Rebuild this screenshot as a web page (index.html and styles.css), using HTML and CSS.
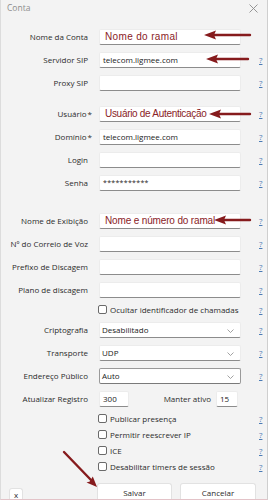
FILE: index.html
```html
<!DOCTYPE html>
<html lang="pt-BR">

<head>
    <meta charset="UTF-8">
    <meta name="viewport" content="width=device-width, initial-scale=1.0">
    <title>Conta</title>

    <link rel="stylesheet" href="styles.css">
</head>

<body>

    <!-- DIALOG -->
    <div class="dialog">
        <div class="dialog__title">
            <span class="dialog__title-text">Conta</span>
            <svg class="dialog__close" width="9" height="9" viewBox="0 0 9 9">
                <path d="M0.5 0.5 L8.5 8.5 M8.5 0.5 L0.5 8.5" stroke="#8a8a8a" stroke-width="0.9" fill="none" />
            </svg>
        </div>

        <div class="form">
            <div class="form__row">
                <label class="form__label">Nome da Conta</label>
                <div class="form__field"><span class="form__note form__note--wide">Nome do ramal</span></div>
            </div>
            <div class="form__row">
                <label class="form__label">Servidor SIP</label>
                <div class="form__field">telecom.ligmee.com</div>
                <a class="form__help" href="#">?</a>
            </div>
            <div class="form__row">
                <label class="form__label">Proxy SIP</label>
                <div class="form__field"></div>
                <a class="form__help" href="#">?</a>
            </div>

            <div class="form__row form__row--gap-s">
                <label class="form__label">Usuário<span class="form__req">*</span></label>
                <div class="form__field"><span class="form__note form__note--tight">Usuário de Autenticação</span></div>
                <a class="form__help" href="#">?</a>
            </div>
            <div class="form__row">
                <label class="form__label">Domínio<span class="form__req">*</span></label>
                <div class="form__field">telecom.ligmee.com</div>
                <a class="form__help" href="#">?</a>
            </div>
            <div class="form__row">
                <label class="form__label">Login</label>
                <div class="form__field"></div>
                <a class="form__help" href="#">?</a>
            </div>
            <div class="form__row">
                <label class="form__label">Senha</label>
                <div class="form__field form__field--pass">***********</div>
                <a class="form__help" href="#">?</a>
            </div>

            <div class="form__row form__row--gap-l">
                <label class="form__label">Nome de Exibição</label>
                <div class="form__field"><span class="form__note form__note--mid">Nome e número do ramal</span></div>
                <a class="form__help" href="#">?</a>
            </div>
            <div class="form__row">
                <label class="form__label">Nº do Correio de Voz</label>
                <div class="form__field"></div>
                <a class="form__help" href="#">?</a>
            </div>
            <div class="form__row">
                <label class="form__label">Prefixo de Discagem</label>
                <div class="form__field"></div>
                <a class="form__help" href="#">?</a>
            </div>
            <div class="form__row">
                <label class="form__label">Plano de discagem</label>
                <div class="form__field"></div>
                <a class="form__help" href="#">?</a>
            </div>
            <div class="form__row form__row--check">
                <span></span>
                <div class="check"><span class="check__box"></span>Ocultar identificador de chamadas</div>
                <a class="form__help" href="#">?</a>
            </div>

            <div class="form__row">
                <label class="form__label">Criptografia</label>
                <div class="form__field form__select">Desabilitado
                    <svg class="form__chevron" width="7" height="4" viewBox="0 0 7 4"><path d="M0.5 0.5 L3.5 3.5 L6.5 0.5" stroke="#8a8a8a" stroke-width="0.8" fill="none" /></svg>
                </div>
                <a class="form__help" href="#">?</a>
            </div>
            <div class="form__row">
                <label class="form__label">Transporte</label>
                <div class="form__field form__select">UDP
                    <svg class="form__chevron" width="7" height="4" viewBox="0 0 7 4"><path d="M0.5 0.5 L3.5 3.5 L6.5 0.5" stroke="#8a8a8a" stroke-width="0.8" fill="none" /></svg>
                </div>
                <a class="form__help" href="#">?</a>
            </div>
            <div class="form__row">
                <label class="form__label">Endereço Público</label>
                <div class="form__field form__select form__select--focus">Auto
                    <svg class="form__chevron" width="7" height="4" viewBox="0 0 7 4"><path d="M0.5 0.5 L3.5 3.5 L6.5 0.5" stroke="#8a8a8a" stroke-width="0.8" fill="none" /></svg>
                </div>
                <a class="form__help" href="#">?</a>
            </div>
            <div class="form__row">
                <label class="form__label">Atualizar Registro</label>
                <div class="form__pair">
                    <div class="form__field form__field--num">300</div>
                    <span class="form__keep">Manter ativo</span>
                    <div class="form__field form__field--short">15</div>
                </div>
            </div>

            <div class="form__row form__row--small">
                <span></span>
                <div class="check"><span class="check__box"></span>Publicar presença</div>
                <a class="form__help" href="#">?</a>
            </div>
            <div class="form__row form__row--small">
                <span></span>
                <div class="check"><span class="check__box"></span>Permitir reescrever IP</div>
                <a class="form__help" href="#">?</a>
            </div>
            <div class="form__row form__row--small">
                <span></span>
                <div class="check"><span class="check__box"></span>ICE</div>
                <a class="form__help" href="#">?</a>
            </div>
            <div class="form__row form__row--small">
                <span></span>
                <div class="check"><span class="check__box"></span>Desabilitar timers de sessão</div>
                <a class="form__help" href="#">?</a>
            </div>
        </div>

        <div class="dialog__footer">
            <button class="btn btn--x">x</button>
            <button class="btn btn--save">Salvar</button>
            <button class="btn btn--cancel">Cancelar</button>
        </div>

        <!-- setas de anotação -->
        <svg class="marks" width="268" height="500" viewBox="0 0 268 500">
            <g stroke="#861b1d" stroke-width="2.4" fill="none" stroke-linecap="round">
                <line x1="213" y1="35" x2="250" y2="35" />
                <line x1="215" y1="59" x2="248" y2="59" />
                <line x1="218" y1="114" x2="250" y2="114" />
                <line x1="223" y1="220" x2="250" y2="220" />
                <line x1="64" y1="452" x2="91" y2="480" />
            </g>
            <g fill="#861b1d">
                <polygon points="204,35 216,30.5 214,35 216,39.5" />
                <polygon points="206,59 218,54.5 216,59 218,63.5" />
                <polygon points="209,114 221,109.5 219,114 221,118.5" />
                <polygon points="214,220 226,215.5 224,220 226,224.5" />
                <polygon points="97,487 86.5,482.5 89.8,481.5 92.8,476.5" />
            </g>
        </svg>
    </div>
    <!-- END DIALOG -->

</body>
</html>
```

FILE: styles.css
```css
* {
    box-sizing: border-box;
}

body {
    margin: 0;
    font-family: "Open Sans", "Noto Sans", sans-serif;
    font-size: 8px;
    color: #333;
    background: #f3f3f3;
}

/* Dialog */

.dialog {
    position: relative;
    width: 268px;
    height: 500px;
    overflow: hidden;
    background: #f3f3f3;
    border-left: 1px solid #dcdcdc;
    border-right: 1px solid #cfcfcf;
    border-bottom: 1px solid #e3c3c8;
}

.dialog__title {
    height: 25px;
    display: flex;
    justify-content: space-between;
    align-items: flex-start;
    padding: 2px 9px 0 6px;
}

.dialog__title-text {
    font-size: 8.5px;
    color: #8d8d8d;
}

.dialog__close {
    margin-top: 2px;
}

/* Form */

.form__row {
    display: grid;
    grid-template-columns: 90px 142px 1fr;
    column-gap: 8px;
    align-items: center;
    height: 23px;
}

.form__row--gap-s {
    margin-top: 8px;
}

.form__row--gap-l {
    margin-top: 15px;
}

.form__row--check {
    height: 17px;
}

.form__row--small {
    height: 16px;
}

.form__label {
    text-align: right;
    padding-right: 3px;
    white-space: nowrap;
    color: #2b2b2b;
}

.form__req {
    margin-left: 1px;
    margin-right: -4px;
}

.form__field {
    position: relative;
    height: 16px;
    display: flex;
    align-items: center;
    padding: 0 3px;
    background: #fff;
    border: 1px solid #ececec;
    border-bottom-color: #8c8c8c;
    border-radius: 2px;
    color: #222;
    white-space: nowrap;
    overflow: hidden;
}

.form__field--pass {
    font-size: 7px;
    letter-spacing: 0.3px;
}

.form__note {
    font-family: "Liberation Sans", Arial, sans-serif;
    font-size: 10px;
    color: #8a2226;
    padding-left: 2px;
}

.form__note--wide {
    letter-spacing: 0.35px;
}

.form__note--tight {
    letter-spacing: -0.3px;
}

.form__note--mid {
    letter-spacing: -0.15px;
}

.form__select {
    padding-left: 2px;
}

.form__select--focus {
    border-color: #9a9a9a;
    border-bottom-color: #7a7a7a;
}

.form__chevron {
    position: absolute;
    right: 6px;
    top: 6px;
}

.form__help {
    padding-left: 10px;
    font-size: 8px;
    color: #4a7bb5;
    text-decoration: underline;
}

.form__pair {
    display: flex;
    align-items: center;
}

.form__field--num {
    width: 30px;
}

.form__field--short {
    width: 22px;
    margin-right: 3px;
}

.form__keep {
    margin-left: auto;
    margin-right: 5px;
    color: #2b2b2b;
}

/* Checkbox */

.check {
    display: flex;
    align-items: center;
    gap: 3px;
    color: #2b2b2b;
    white-space: nowrap;
}

.check__box {
    width: 9px;
    height: 9px;
    margin-left: -1px;
    border: 1px solid #6a6a6a;
    border-radius: 2px;
    background: #fff;
}

/* Footer */

.dialog__footer {
    display: flex;
    align-items: flex-start;
    padding: 9px 0 0 8px;
}

.btn {
    font-family: inherit;
    font-size: 8px;
    color: #2a2a2a;
    background: #fff;
    border: 1px solid #e2e2e2;
    border-bottom-color: #cfcfcf;
    border-radius: 3px;
    padding: 0;
}

.btn--x {
    width: 14px;
    height: 14px;
    margin-top: 5px;
    padding-bottom: 3px;
}

.btn--save {
    width: 75px;
    height: 22px;
    margin-left: 74px;
    padding-bottom: 4px;
}

.btn--cancel {
    width: 76px;
    height: 22px;
    margin-left: 8px;
    padding-bottom: 4px;
}

/* Setas */

.marks {
    position: absolute;
    top: 0;
    left: -1px;
    pointer-events: none;
}
```
